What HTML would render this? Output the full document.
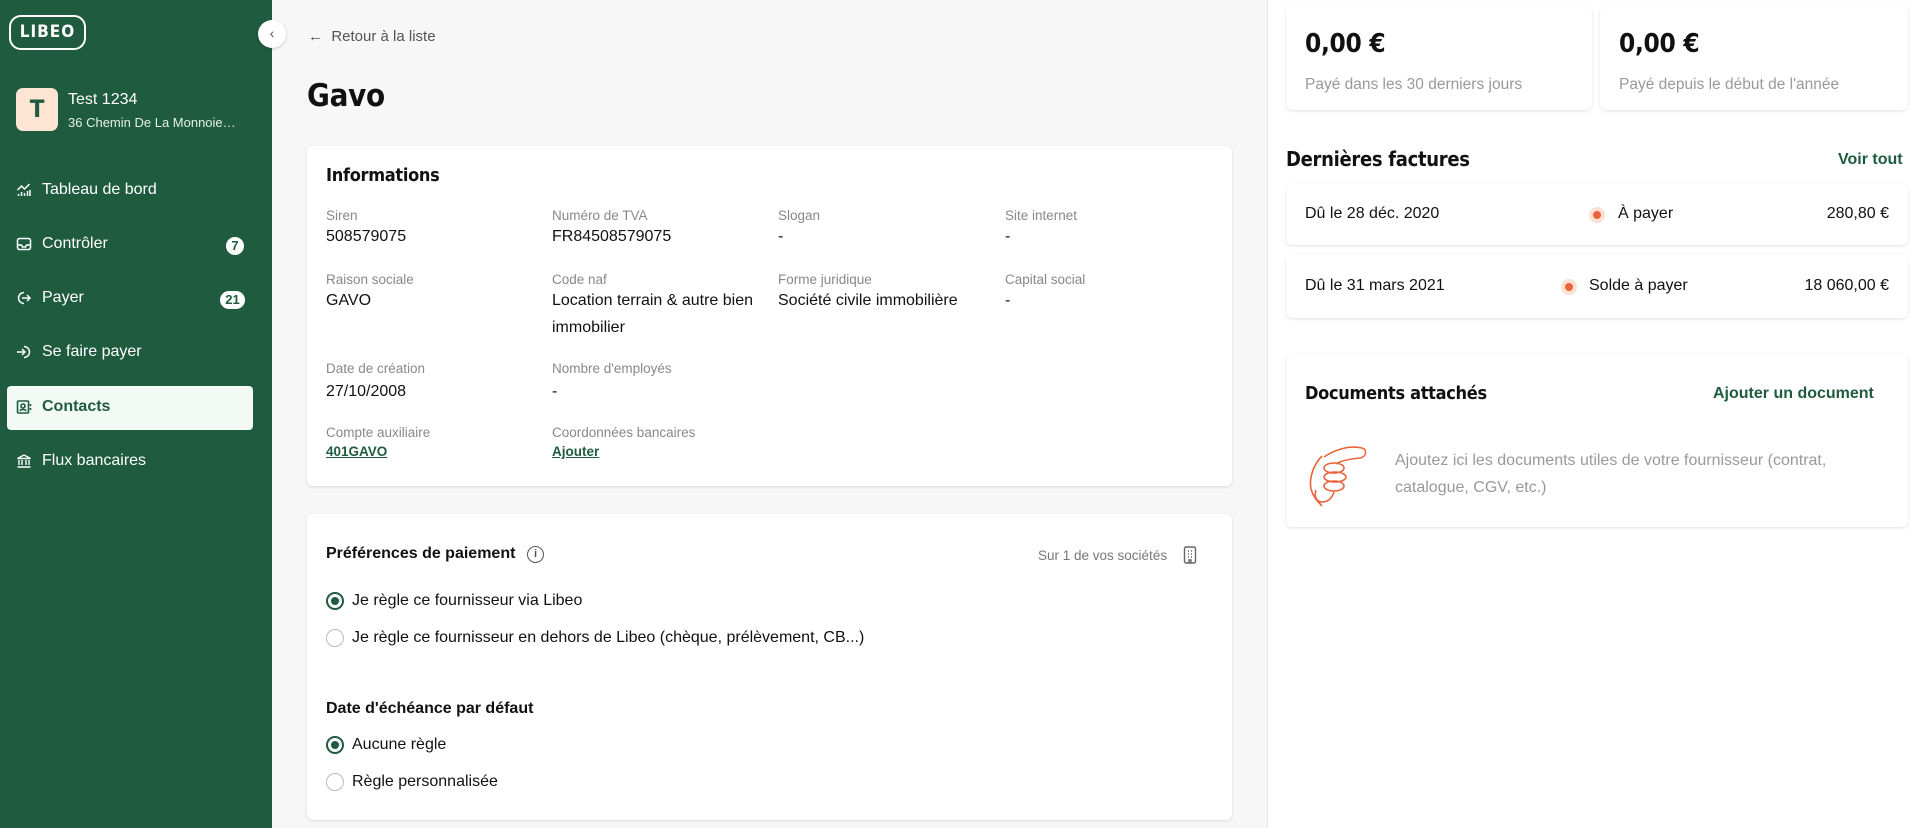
<!DOCTYPE html>
<html><head><meta charset="utf-8"><style>
*{box-sizing:border-box;margin:0;padding:0}
body{width:1920px;height:828px;overflow:hidden;font-family:"Liberation Sans",sans-serif;background:#fff;color:#111;position:relative}
.abs{position:absolute}
.sb{left:0;top:0;width:272px;height:828px;background:#1f5b3f;color:#fff}
.nav{position:absolute;left:16px;font-size:16px;display:flex;align-items:center;gap:10px}
.badge{position:absolute;background:#fff;color:#1f5b3f;font-weight:bold;font-size:13px;border-radius:10px;height:18px;line-height:18px;text-align:center}
.main{left:272px;top:0;width:995px;height:828px;background:#f7f7f7}
.card{position:absolute;background:#fff;border-radius:6px;box-shadow:0 1px 3px rgba(0,0,0,.12)}
.h{font-family:"DejaVu Sans Condensed","DejaVu Sans",sans-serif;font-weight:bold;letter-spacing:-0.3px}
.lbl{position:absolute;font-size:13.5px;color:#888}
.val{position:absolute;font-size:16px;color:#111;line-height:27px}
.radio{position:absolute;width:18px;height:18px;border-radius:50%;border:1.5px solid #bbb;background:#fff}
.radio.on{border:2px solid #1f5b3f}
.radio.on:after{content:"";position:absolute;left:3px;top:3px;width:8px;height:8px;border-radius:50%;background:#1f5b3f}
.rt{position:absolute;font-size:16px}
.dot{position:absolute;width:16px;height:16px;border-radius:50%;background:#fde0d3}
.dot:after{content:"";position:absolute;left:4px;top:4px;width:8px;height:8px;border-radius:50%;background:#e8643c}
</style></head><body>
<div class="abs sb">
  <div class="abs h" style="left:9px;top:15px;width:77px;height:35px;border:2.5px solid #fff;border-radius:12px;text-align:center;line-height:30px;font-size:17px;letter-spacing:1px">LIBEO</div>
  <div class="abs h" style="left:16px;top:88px;width:42px;height:43px;background:#fde4d3;border-radius:7px;color:#1f5b3f;font-size:24px;text-align:center;line-height:43px">T</div>
  <div class="abs" style="left:68px;top:91px;font-size:16px">Test 1234</div>
  <div class="abs" style="left:68px;top:115px;font-size:13px;color:#e6efe9">36 Chemin De La Monnoie…</div>
  <div class="nav" style="top:181px"><svg width="16" height="16" viewBox="0 0 16 16" fill="none" stroke="#fff" stroke-width="1.5"><path d="M1.5 8l4-4 3 3 5-5M2.5 14v-2M5.5 14v-4M8.5 14v-3M11.5 14v-5M14 14V8"/></svg>Tableau de bord</div>
  <div class="nav" style="top:235px"><svg width="16" height="16" viewBox="0 0 16 16" fill="none" stroke="#fff" stroke-width="1.5"><rect x="1.5" y="2.5" width="13" height="11" rx="2"/><path d="M1.5 9h4l1 2h3l1-2h4"/></svg>Contrôler</div>
  <div class="badge" style="left:226px;top:237px;width:18px">7</div>
  <div class="nav" style="top:289px"><svg width="16" height="16" viewBox="0 0 16 16" fill="none" stroke="#fff" stroke-width="1.5"><path d="M8 2.5A5.5 5.5 0 1 0 8 13.5M6 8h8M11 5l3 3-3 3"/></svg>Payer</div>
  <div class="badge" style="left:220px;top:291px;width:25px">21</div>
  <div class="nav" style="top:343px"><svg width="16" height="16" viewBox="0 0 16 16" fill="none" stroke="#fff" stroke-width="1.5"><path d="M8 2.5A5.5 5.5 0 1 1 8 13.5M1 8h8M6 5l3 3-3 3"/></svg>Se faire payer</div>
  <div class="abs" style="left:7px;top:386px;width:246px;height:44px;background:#f3faf6;border-radius:4px"></div>
  <div class="nav" style="top:398px;color:#1f5b3f;font-weight:bold"><svg width="16" height="16" viewBox="0 0 16 16" fill="none" stroke="#1f5b3f" stroke-width="1.6"><rect x="1.5" y="2" width="11" height="12" rx="1"/><circle cx="7" cy="7" r="2"/><path d="M4 12c.5-2 5.5-2 6 0M14.5 5v2M14.5 9v2"/></svg>Contacts</div>
  <div class="nav" style="top:452px"><svg width="16" height="16" viewBox="0 0 16 16" fill="none" stroke="#fff" stroke-width="1.4"><path d="M1.5 5.5L8 2l6.5 3.5zM3 7v5M6 7v5M10 7v5M13 7v5M1.5 14h13"/></svg>Flux bancaires</div>
</div>
<div class="abs" style="left:258px;top:20px;width:28px;height:28px;border-radius:50%;background:#fff;box-shadow:0 1px 3px rgba(0,0,0,.2);text-align:center;line-height:26px;color:#555;font-size:14px;z-index:3">‹</div>
<div class="abs main">
  <div class="abs" style="left:36px;top:28px;font-size:15px;color:#555">←&nbsp;&nbsp;Retour à la liste</div>
  <div class="abs h" style="left:35px;top:78px;font-size:31px">Gavo</div>
  <div class="card" style="left:35px;top:146px;width:925px;height:340px">
    <div class="abs h" style="left:19px;top:19px;font-size:18px">Informations</div>
    <div class="lbl" style="left:19px;top:62px">Siren</div><div class="val" style="left:19px;top:77px">508579075</div>
    <div class="lbl" style="left:245px;top:62px">Numéro de TVA</div><div class="val" style="left:245px;top:77px">FR84508579075</div>
    <div class="lbl" style="left:471px;top:62px">Slogan</div><div class="val" style="left:471px;top:77px">-</div>
    <div class="lbl" style="left:698px;top:62px">Site internet</div><div class="val" style="left:698px;top:77px">-</div>
    <div class="lbl" style="left:19px;top:126px">Raison sociale</div><div class="val" style="left:19px;top:141px">GAVO</div>
    <div class="lbl" style="left:245px;top:126px">Code naf</div><div class="val" style="left:245px;top:141px;width:220px">Location terrain &amp; autre bien immobilier</div>
    <div class="lbl" style="left:471px;top:126px">Forme juridique</div><div class="val" style="left:471px;top:141px">Société civile immobilière</div>
    <div class="lbl" style="left:698px;top:126px">Capital social</div><div class="val" style="left:698px;top:141px">-</div>
    <div class="lbl" style="left:19px;top:215px">Date de création</div><div class="val" style="left:19px;top:232px">27/10/2008</div>
    <div class="lbl" style="left:245px;top:215px">Nombre d'employés</div><div class="val" style="left:245px;top:232px">-</div>
    <div class="lbl" style="left:19px;top:279px">Compte auxiliaire</div><div class="val" style="left:19px;top:292px;font-size:13.5px;font-weight:bold;color:#1f5b3f;text-decoration:underline">401GAVO</div>
    <div class="lbl" style="left:245px;top:279px">Coordonnées bancaires</div><div class="val" style="left:245px;top:292px;font-size:13.5px;font-weight:bold;color:#1f5b3f;text-decoration:underline">Ajouter</div>
  </div>
  <div class="card" style="left:35px;top:514px;width:925px;height:306px">
    <div class="abs" style="left:19px;top:31px;font-size:16px;font-weight:bold">Préférences de paiement</div>
    <div class="abs" style="left:220px;top:32px;width:17px;height:17px;border:1.5px solid #555;border-radius:50%;font-size:11px;text-align:center;line-height:14px;color:#555;font-weight:bold">i</div>
    <div class="abs" style="left:731px;top:34px;font-size:13.5px;color:#777">Sur 1 de vos sociétés</div>
    <svg class="abs" style="left:876px;top:32px" width="14" height="18" viewBox="0 0 14 18" fill="none" stroke="#666" stroke-width="1.4"><rect x="1.5" y="1" width="11" height="16" rx="1.5"/><path d="M5 5h1M8 5h1M5 8h1M8 8h1M5 11h1M8 11h1M6 17v-3h2v3"/></svg>
    <div class="radio on" style="left:19px;top:78px"></div><div class="rt" style="left:45px;top:78px">Je règle ce fournisseur via Libeo</div>
    <div class="radio" style="left:19px;top:115px"></div><div class="rt" style="left:45px;top:115px">Je règle ce fournisseur en dehors de Libeo (chèque, prélèvement, CB...)</div>
    <div class="abs" style="left:19px;top:186px;font-size:16px;font-weight:bold">Date d'échéance par défaut</div>
    <div class="radio on" style="left:19px;top:222px"></div><div class="rt" style="left:45px;top:222px">Aucune règle</div>
    <div class="radio" style="left:19px;top:259px"></div><div class="rt" style="left:45px;top:259px">Règle personnalisée</div>
  </div>
</div>
<div class="abs" style="left:1267px;top:0;width:1px;height:828px;background:#e8e8e8"></div>
<div class="card" style="left:1286px;top:6px;width:306px;height:104px">
  <div class="abs h" style="left:19px;top:23px;font-size:26px">0,00 €</div>
  <div class="abs" style="left:19px;top:70px;font-size:15.5px;color:#999">Payé dans les 30 derniers jours</div>
</div>
<div class="card" style="left:1600px;top:6px;width:308px;height:104px">
  <div class="abs h" style="left:19px;top:23px;font-size:26px">0,00 €</div>
  <div class="abs" style="left:19px;top:70px;font-size:15.5px;color:#999">Payé depuis le début de l'année</div>
</div>
<div class="abs h" style="left:1286px;top:147px;font-size:20px">Dernières factures</div>
<div class="abs" style="left:1838px;top:151px;font-size:16px;font-weight:bold;color:#1f5b3f">Voir tout</div>
<div class="card" style="left:1286px;top:184px;width:622px;height:61px">
  <div class="abs" style="left:19px;top:21px;font-size:16px">Dû le 28 déc. 2020</div>
  <div class="dot" style="left:303px;top:23px"></div>
  <div class="abs" style="left:332px;top:21px;font-size:16px">À payer</div>
  <div class="abs" style="right:19px;top:21px;font-size:16px">280,80 €</div>
</div>
<div class="card" style="left:1286px;top:255px;width:622px;height:63px">
  <div class="abs" style="left:19px;top:22px;font-size:16px">Dû le 31 mars 2021</div>
  <div class="dot" style="left:275px;top:24px"></div>
  <div class="abs" style="left:303px;top:22px;font-size:16px">Solde à payer</div>
  <div class="abs" style="right:19px;top:22px;font-size:16px">18 060,00 €</div>
</div>
<div class="card" style="left:1286px;top:354px;width:622px;height:173px">
  <div class="abs h" style="left:19px;top:29px;font-size:18px">Documents attachés</div>
  <div class="abs" style="left:427px;top:31px;font-size:16px;font-weight:bold;color:#1f5b3f">Ajouter un document</div>
  <svg class="abs" style="left:18px;top:88px" width="64" height="66" viewBox="0 0 64 66" fill="none" stroke="#e8643c" stroke-width="1.6"><path d="M20 15C30 8 45 3 58 6c6 2 4 9-2 10-10 1-20 3-24 6M18 14C8 24 4 40 8 50c2 6 8 12 10 14M12 48c-2 6 0 12 6 12s10-4 12-10"/><ellipse cx="30" cy="26" rx="10" ry="5"/><ellipse cx="31" cy="35" rx="11" ry="5"/><ellipse cx="30" cy="44" rx="10" ry="5"/></svg>
  <div class="abs" style="left:109px;top:93px;width:440px;font-size:16px;line-height:27px;color:#999">Ajoutez ici les documents utiles de votre fournisseur (contrat, catalogue, CGV, etc.)</div>
</div>
</body></html>
